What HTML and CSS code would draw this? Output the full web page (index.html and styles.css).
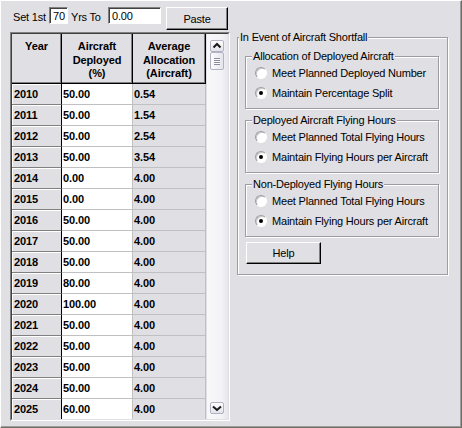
FILE: index.html
```html
<!DOCTYPE html>
<html lang="en">
<head>
<meta charset="utf-8">
<title>Aircraft Shortfall</title>
<link rel="stylesheet" href="styles.css">
</head>
<body>
<div class="window">
  <div class="left">
    <div class="toolbar">
      <span class="lbl lbl-set">Set 1st</span>
      <input class="field field-yrs" type="text" value="70">
      <span class="lbl lbl-to">Yrs To</span>
      <input class="field field-val" type="text" value="0.00">
      <button class="btn btn-paste" type="button">Paste</button>
    </div>
    <div class="grid-frame">
      <div class="grid-inner">
        <div class="grid">
          <div class="hcell">Year</div>
          <div class="hcell">Aircraft<br>Deployed<br>(%)</div>
          <div class="hcell">Average<br>Allocation<br>(Aircraft)</div>

          <div class="c-year">2010</div><div class="c-dep">50.00</div><div class="c-avg">0.54</div>
          <div class="c-year">2011</div><div class="c-dep">50.00</div><div class="c-avg">1.54</div>
          <div class="c-year">2012</div><div class="c-dep">50.00</div><div class="c-avg">2.54</div>
          <div class="c-year">2013</div><div class="c-dep">50.00</div><div class="c-avg">3.54</div>
          <div class="c-year">2014</div><div class="c-dep">0.00</div><div class="c-avg">4.00</div>
          <div class="c-year">2015</div><div class="c-dep">0.00</div><div class="c-avg">4.00</div>
          <div class="c-year">2016</div><div class="c-dep">50.00</div><div class="c-avg">4.00</div>
          <div class="c-year">2017</div><div class="c-dep">50.00</div><div class="c-avg">4.00</div>
          <div class="c-year">2018</div><div class="c-dep">50.00</div><div class="c-avg">4.00</div>
          <div class="c-year">2019</div><div class="c-dep">80.00</div><div class="c-avg">4.00</div>
          <div class="c-year">2020</div><div class="c-dep">100.00</div><div class="c-avg">4.00</div>
          <div class="c-year">2021</div><div class="c-dep">50.00</div><div class="c-avg">4.00</div>
          <div class="c-year">2022</div><div class="c-dep">50.00</div><div class="c-avg">4.00</div>
          <div class="c-year">2023</div><div class="c-dep">50.00</div><div class="c-avg">4.00</div>
          <div class="c-year">2024</div><div class="c-dep">50.00</div><div class="c-avg">4.00</div>
          <div class="c-year">2025</div><div class="c-dep">60.00</div><div class="c-avg">4.00</div>
        </div>
        <div class="vscroll">
          <div class="sb-btn">
            <svg width="12" height="10" viewBox="0 0 12 10"><polyline points="2.5,6.5 6,3 9.5,6.5" fill="none" stroke="#1a1a1a" stroke-width="2"/></svg>
          </div>
          <div class="sb-thumb"><span class="grip"></span></div>
          <div class="sb-space"></div>
          <div class="sb-btn">
            <svg width="12" height="10" viewBox="0 0 12 10"><polyline points="2,3.5 6,7 10,3.5" fill="none" stroke="#1a1a1a" stroke-width="2"/></svg>
          </div>
        </div>
      </div>
    </div>
  </div>

  <div class="right">
    <fieldset class="group outer">
      <legend>In Event of Aircraft Shortfall</legend>
      <fieldset class="group inner">
        <legend>Allocation of Deployed Aircraft</legend>
        <div class="opt"><span class="radio"></span>Meet Planned Deployed Number</div>
        <div class="opt"><span class="radio on"></span>Maintain Percentage Split</div>
      </fieldset>
      <fieldset class="group inner">
        <legend>Deployed Aircraft Flying Hours</legend>
        <div class="opt"><span class="radio"></span>Meet Planned Total Flying Hours</div>
        <div class="opt"><span class="radio on"></span>Maintain Flying Hours per Aircraft</div>
      </fieldset>
      <fieldset class="group inner">
        <legend>Non-Deployed Flying Hours</legend>
        <div class="opt"><span class="radio"></span>Meet Planned Total Flying Hours</div>
        <div class="opt"><span class="radio on"></span>Maintain Flying Hours per Aircraft</div>
      </fieldset>
      <button class="btn btn-help" type="button">Help</button>
    </fieldset>
  </div>
</div>
</body>
</html>
```

FILE: styles.css
```css
* { box-sizing: border-box; }
html, body { margin: 0; padding: 0; }
body {
  width: 462px;
  height: 428px;
  overflow: hidden;
  background: #e0dfe3;
  font-family: "Liberation Sans", Arial, sans-serif;
  font-size: 11px;
  color: #000;
}
.window {
  width: 462px;
  height: 428px;
  display: flex;
  align-items: flex-start;
  border-top: 1px solid #fff;
  border-left: 1px solid #fff;
  border-right: 1px solid #716f64;
  border-bottom: 1px solid #716f64;
  box-shadow: inset -1px -1px 0 #9d9da1;
  padding: 6px 0 0 9px;
}

/* ---------- left column ---------- */
.left { width: 220px; display: flex; flex-direction: column; }
.toolbar { display: flex; align-items: flex-start; height: 23px; }
.lbl { line-height: 17px; padding-top: 2px; letter-spacing: -0.2px; white-space: nowrap; }
.lbl-set { width: 39px; padding-left: 3px; }
.lbl-to { width: 37px; margin-left: 3px; }
.field {
  height: 17px;
  margin: 0;
  border: 1px solid;
  border-color: #808080 #fff #fff #808080;
  box-shadow: inset 1px 1px 0 #404040;
  background: #fff;
  font-family: "Liberation Sans", Arial, sans-serif;
  font-size: 11px;
  letter-spacing: -0.2px;
  color: #000;
  padding: 0 0 0 3px;
  outline: none;
}
.field-yrs { width: 19px; }
.field-val { width: 53px; }
.btn {
  margin: 0;
  padding: 0;
  background: #e0dfe3;
  border: 1px solid;
  border-color: #fff #000 #000 #fff;
  box-shadow: inset -1px -1px 0 #808080;
  font-family: "Liberation Sans", Arial, sans-serif;
  font-size: 11px;
  letter-spacing: -0.2px;
  color: #000;
}
.btn-paste { width: 62px; height: 23px; margin-left: 5px; }

.grid-frame {
  margin-top: 2px;
  width: 220px;
  height: 389px;
  border: 1px solid;
  border-color: #808080 #fff #fff #808080;
}
.grid-inner {
  height: 100%;
  display: flex;
  overflow: hidden;
  border: 1px solid;
  border-color: #404040 #e0dfe3 #e0dfe3 #404040;
}
.grid {
  display: grid;
  grid-template-columns: 50px 71px 73px;
  grid-template-rows: 50px;
  grid-auto-rows: 21px;
  flex: none;
  align-self: flex-start;
  font-weight: bold;
  letter-spacing: -0.1px;
}
.hcell {
  background: #e0dfe3;
  border-right: 1px solid #000;
  border-bottom: 1px solid #000;
  box-shadow: inset -1px -1px 0 #808080;
  text-align: center;
  line-height: 13.5px;
  padding-top: 6px;
}
.c-year, .c-dep, .c-avg {
  line-height: 20px;
  white-space: nowrap;
  overflow: hidden;
}
.c-year {
  background: #e0dfe3;
  border-right: 1px solid #000;
  border-bottom: 1px solid #808080;
  box-shadow: inset 1px 1px 0 #fff;
  padding-left: 2px;
}
.c-dep {
  background: #fff;
  border-right: 1px solid #c0c0c0;
  border-bottom: 1px solid #c0c0c0;
  padding-left: 1px;
}
.c-avg {
  background: #e0dfe3;
  border-right: 1px solid #c0c0c0;
  border-bottom: 1px solid #c0c0c0;
  padding-left: 1px;
}

.vscroll {
  flex: 1;
  display: flex;
  flex-direction: column;
  align-items: flex-start;
  padding: 6px 0 5px 4px;
  background: linear-gradient(to right, #e0dfe3 0 1px, #f8f8fa 1px, #f3f3f7 70%, #e6e6ec);
}
.sb-btn {
  width: 14px;
  height: 12px;
  border: 1px solid #b2b2c4;
  border-radius: 2px;
  background: linear-gradient(to bottom, #ffffff, #e2e2ea);
  display: flex;
  align-items: center;
  justify-content: center;
  flex: none;
}
.sb-btn svg { display: block; }
.sb-thumb {
  width: 14px;
  height: 18px;
  border: 1px solid #b2b2c4;
  border-radius: 2px;
  background: linear-gradient(to right, #fdfdfe, #e4e4ec);
  display: flex;
  align-items: center;
  justify-content: center;
  flex: none;
}
.grip {
  width: 6px;
  height: 7px;
  background: repeating-linear-gradient(to bottom, #8c8ca0 0 1px, #fbfbfd 1px 2px);
}
.sb-space { flex: 1; }

/* ---------- right column ---------- */
.right { margin-left: 7px; padding-top: 24px; }
.group {
  margin: 0;
  border: 1px solid #9d9da1;
  box-shadow: inset 1px 1px 0 #fff, 1px 1px 0 #fff;
  min-width: 0;
}
.group legend {
  padding: 0 1px;
  line-height: 13px;
  background: #e0dfe3;
  letter-spacing: -0.2px;
  white-space: nowrap;
}
.outer {
  width: 211px;
  padding: 6px 8px 10px 7px;
}
.outer > legend { margin-left: -6px; }
.inner {
  padding: 0 4px 5px 9px;
  margin-bottom: 5px;
}
.inner > legend { margin-left: -3px; }
.opt {
  display: flex;
  align-items: center;
  height: 20px;
  letter-spacing: -0.2px;
  white-space: nowrap;
}
.radio {
  position: relative;
  flex: none;
  width: 12px;
  height: 12px;
  margin-right: 5px;
  border-radius: 50%;
  background: #fff;
  border: 1px solid;
  border-color: #9d9da1 #fff #fff #9d9da1;
  box-shadow: inset 1px 1px 0 #c8c8cc;
}
.radio.on::after {
  content: "";
  position: absolute;
  left: 3px;
  top: 3px;
  width: 4px;
  height: 4px;
  border-radius: 50%;
  background: #000;
}
.btn-help {
  display: block;
  width: 75px;
  height: 22px;
  margin: 3px 0 0 1px;
}
```
